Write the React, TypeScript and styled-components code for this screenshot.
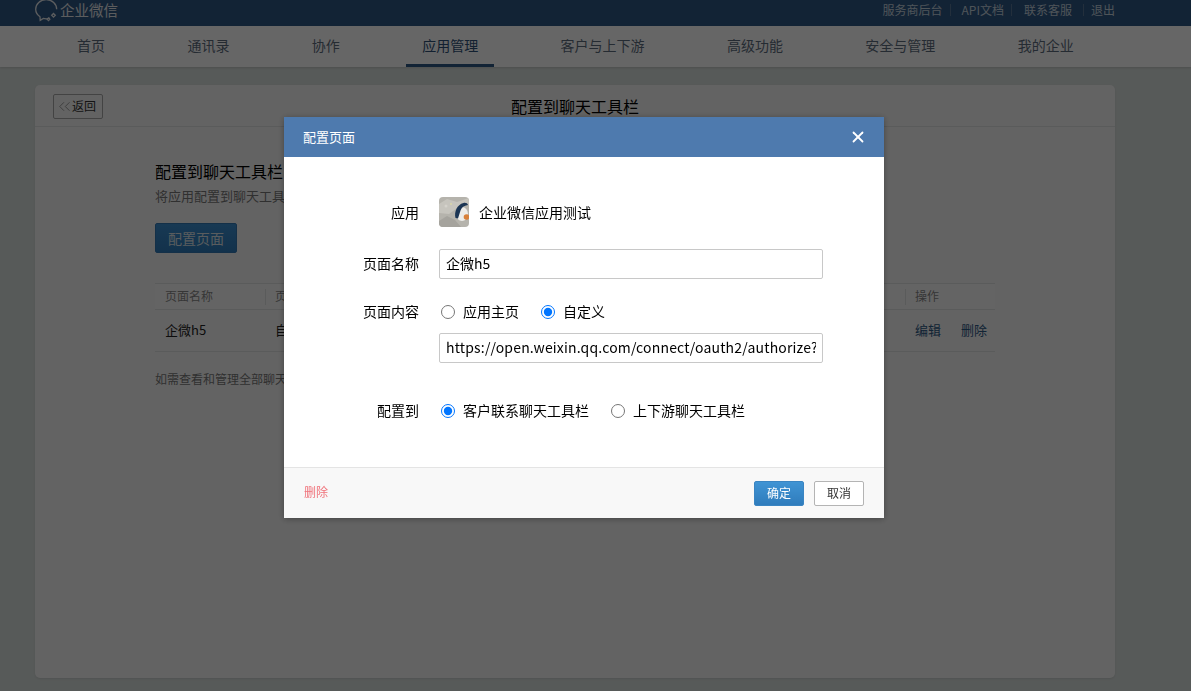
import React from 'react';
import styled, { createGlobalStyle } from 'styled-components';
import { ChevronsLeft, X } from 'lucide-react';

const GlobalStyle = createGlobalStyle`
  html, body {
    margin: 0;
    height: 691px;
    overflow: hidden;
    background: #fff;
    font-family: "Noto Sans CJK SC", "Liberation Sans", sans-serif;
    font-size: 14px;
    color: #000;
  }
  * { box-sizing: border-box; }
`;

const navItems = ['首页', '通讯录', '协作', '应用管理', '客户与上下游', '高级功能', '安全与管理', '我的企业'];

const App = () => {
  return (
    <>
      <GlobalStyle />
      <Page>
        <TopBar>
          <Logo>
            <svg width="23" height="23" viewBox="0 0 23 23" fill="none" stroke="currentColor" strokeWidth="1.3">
              <path d="M15 19.2a11.500 11.500 0 0 1-3.800.6c-1 0-2-.1-2.900-.4L5.200 21.400l-.2-3.600C2.200 15.900.7 13.300.7 10.300.7 5 5.300.7 11.200.7s10.500 4.300 10.500 9.600" />
              <path d="M18.500 14.500l1.800 1.800-1.800 1.800-1.800-1.800z" />
              <path d="M13.500 19l1.300 1.300-1.300 1.300-1.300-1.300z" />
            </svg>
            <LogoText>企业微信</LogoText>
          </Logo>
          <TopLinks>
            <TopLink>服务商后台</TopLink>
            <TopLink $before={7} $pad={11}>API文档</TopLink>
            <TopLink $before={7} $pad={12}>联系客服</TopLink>
            <TopLink $before={11} $pad={7}>退出</TopLink>
          </TopLinks>
        </TopBar>
        <Nav>
          {navItems.map((item) => (
            <NavItem key={item} $active={item === '应用管理'}>{item}</NavItem>
          ))}
        </Nav>
        <Card>
          <CardHead>
            <BackButton>
              <ChevronsLeft size={19} strokeWidth={0.9} />
              <BackText>返回</BackText>
            </BackButton>
            <CardTitle>配置到聊天工具栏</CardTitle>
          </CardHead>
          <CardBody>
            <Heading>配置到聊天工具栏</Heading>
            <Description>将应用配置到聊天工具栏</Description>
            <PrimaryLarge>配置页面</PrimaryLarge>
            <Table>
              <TableHead>
                <HeadCell>页面名称</HeadCell>
                <HeadCell $grow $sep>页面内容</HeadCell>
                <HeadCell $narrow $sep>操作</HeadCell>
              </TableHead>
              <TableRow>
                <Cell>企微h5</Cell>
                <Cell $grow>自定义</Cell>
                <Cell $narrow>
                  <ActionLink>编辑</ActionLink>
                  <ActionLink>删除</ActionLink>
                </Cell>
              </TableRow>
            </Table>
            <Note>如需查看和管理全部聊天工具栏页面</Note>
          </CardBody>
        </Card>
      </Page>

      <Overlay>
        <Modal>
          <ModalHead>
            <ModalTitle>配置页面</ModalTitle>
            <CloseIcon><X size={18} strokeWidth={2.4} /></CloseIcon>
          </ModalHead>
          <ModalBody>
            <FormRow $after={22}>
              <AppLabel>应用</AppLabel>
              <AppInfo>
                <svg width="30" height="30" viewBox="0 0 30 30" style={{ borderRadius: 4 }}>
                  <rect width="30" height="30" fill="#b5b3ac" />
                  <path d="M0 7l8-5 10 3 12-4v7l-12 3-8 6-10-1z" fill="#c6c4bd" />
                  <path d="M0 24l8-5 8 4 6 7H0z" fill="#a5a39d" />
                  <circle cx="7" cy="9" r="1.500" fill="#d4d2cb" />
                  <circle cx="12" cy="7" r="1" fill="#d8d6a8" />
                  <ellipse cx="23" cy="17" rx="6" ry="7" fill="#ecebe8" />
                  <path d="M16.500 21c-1.500-6 1.500-13.500 8-15 2.500-.5 4 .5 4.500 2-4 .5-6.500 2.500-7.500 5.500l-2.500 8z" fill="#1b3554" />
                  <circle cx="27.500" cy="20" r="2.800" fill="#d8803a" />
                </svg>
                <AppName>企业微信应用测试</AppName>
              </AppInfo>
            </FormRow>
            <FormRow $after={18}>
              <FormLabel>页面名称</FormLabel>
              <TextInput defaultValue="企微h5" />
            </FormRow>
            <FormRow $after={6}>
              <FormLabel>页面内容</FormLabel>
              <RadioGroup>
                <RadioLabel><input type="radio" name="content" /><RadioText>应用主页</RadioText></RadioLabel>
                <RadioLabel><input type="radio" name="content" defaultChecked /><RadioText>自定义</RadioText></RadioLabel>
              </RadioGroup>
            </FormRow>
            <FormRow $after={33}>
              <span />
              <UrlInput defaultValue="https://open.weixin.qq.com/connect/oauth2/authorize?" />
            </FormRow>
            <FormRow $after={0}>
              <FormLabel>配置到</FormLabel>
              <RadioGroup>
                <RadioLabel><input type="radio" name="target" defaultChecked /><RadioText>客户联系聊天工具栏</RadioText></RadioLabel>
                <RadioLabel><input type="radio" name="target" /><RadioText>上下游聊天工具栏</RadioText></RadioLabel>
              </RadioGroup>
            </FormRow>
          </ModalBody>
          <ModalFoot>
            <DeleteLink>删除</DeleteLink>
            <FootButtons>
              <ConfirmButton>确定</ConfirmButton>
              <CancelButton>取消</CancelButton>
            </FootButtons>
          </ModalFoot>
        </Modal>
      </Overlay>
    </>
  );
};

const Page = styled.div`
  height: 691px;
  background: #dae0de;
  display: flex;
  flex-direction: column;
`;

const TopBar = styled.header`
  height: 26px;
  flex: none;
  background: #2e5886;
  display: flex;
  justify-content: space-between;
  padding: 0 76px 0 35px;
  overflow: hidden;
`;

const Logo = styled.div`
  display: flex;
  align-items: flex-start;
  gap: 2px;
  color: #e6e9ec;
  margin-top: -1px;
`;

const LogoText = styled.span`
  font-size: 14.5px;
  line-height: 22px;
`;

const TopLinks = styled.div`
  display: flex;
  align-items: center;
  height: 20px;
`;

const TopLink = styled.span<{ $before?: number; $pad?: number }>`
  font-size: 12px;
  line-height: 12px;
  color: #c4d2dd;
  ${(p) => p.$pad && `
    border-left: 1px solid #577796;
    margin-left: ${p.$before}px;
    padding-left: ${p.$pad}px;
  `}
`;

const Nav = styled.nav`
  height: 41px;
  flex: none;
  background: #fff;
  display: flex;
  gap: 50.4px;
  padding-left: 61px;
  box-shadow: 0 1px 2px rgba(0, 0, 0, 0.12);
`;

const NavItem = styled.a<{ $active?: boolean }>`
  height: 41px;
  padding: 0 16px;
  font-size: 14px;
  line-height: 38px;
  color: #5d6d7e;
  border-bottom: 3px solid ${(p) => (p.$active ? '#2e5886' : 'transparent')};
  ${(p) => p.$active && 'color: #2e5078;'}
`;

const Card = styled.main`
  width: 1080px;
  height: 593px;
  margin: 18px 0 0 35px;
  background: #f8f8f8;
  border-radius: 5px;
  box-shadow: 0 1px 2px rgba(0, 0, 0, 0.08);
`;

const CardHead = styled.div`
  position: relative;
  height: 42px;
  border-bottom: 1px solid #e2e4e4;
  display: flex;
  align-items: center;
  justify-content: center;
`;

const BackButton = styled.button`
  position: absolute;
  left: 18px;
  top: 9px;
  width: 50px;
  height: 25px;
  padding: 0 0 0 1px;
  display: flex;
  align-items: center;
  background: #f8f8f8;
  border: 1px solid #a8a8a8;
  border-radius: 2px;
  font: inherit;
  font-size: 12px;
  color: #333;
  svg { color: #777; }
`;

const BackText = styled.span`
  margin-left: -2px;
  line-height: 16px;
  padding-bottom: 2px;
`;

const CardTitle = styled.h1`
  margin: 0;
  font-size: 16px;
  font-weight: 400;
  line-height: 42px;
  color: #000;
`;

const CardBody = styled.div`
  padding: 32px 120px 0;
`;

const Heading = styled.h2`
  margin: 0;
  font-size: 16px;
  font-weight: 400;
  line-height: 24px;
  color: #000;
`;

const Description = styled.p`
  margin: 3px 0 0;
  font-size: 13px;
  line-height: 20px;
  color: #787878;
`;

const PrimaryLarge = styled.button`
  display: block;
  width: 82px;
  height: 30px;
  margin-top: 17px;
  padding: 0 0 1px;
  background: linear-gradient(#3d8fd1, #2f7cbc);
  border: 1px solid #3278b3;
  border-radius: 2px;
  font: inherit;
  font-size: 14px;
  color: #dfe6ea;
`;

const Table = styled.div`
  margin-top: 30px;
`;

const TableHead = styled.div`
  height: 27px;
  display: flex;
  align-items: center;
  background: #fbfbfb;
  border-top: 1px solid #e2e4e4;
  border-bottom: 1px solid #e2e4e4;
`;

const TableRow = styled.div`
  height: 42px;
  display: flex;
  align-items: center;
  border-bottom: 1px solid #e2e4e4;
`;

const HeadCell = styled.div<{ $grow?: boolean; $narrow?: boolean; $sep?: boolean }>`
  width: ${(p) => (p.$narrow ? '90px' : '110px')};
  ${(p) => p.$grow && 'flex: 1;'}
  height: 16px;
  padding-left: ${(p) => (p.$sep ? '9px' : '10px')};
  font-size: 12px;
  line-height: 14px;
  color: #888;
  ${(p) => p.$sep && 'border-left: 1px solid #e2e4e4;'}
`;

const Cell = styled.div<{ $grow?: boolean; $narrow?: boolean }>`
  width: ${(p) => (p.$narrow ? '90px' : '110px')};
  ${(p) => p.$grow && 'flex: 1;'}
  padding: 0 0 3px 10px;
  font-size: 13px;
  color: #222;
  display: flex;
  gap: 20px;
`;

const ActionLink = styled.a`
  color: #2e5a86;
`;

const Note = styled.p`
  margin: 18px 0 0;
  font-size: 12px;
  line-height: 18px;
  color: #787878;
`;

const Overlay = styled.div`
  position: fixed;
  inset: 0;
  background: rgba(0, 0, 0, 0.6);
  padding: 117px 0 0 284px;
`;

const Modal = styled.section`
  width: 600px;
  height: 401px;
  background: #fff;
  border-radius: 2px;
  display: flex;
  flex-direction: column;
  box-shadow: 0 1px 6px rgba(0, 0, 0, 0.35);
`;

const ModalHead = styled.div`
  height: 40px;
  flex: none;
  background: #4e7aae;
  padding: 0 19px;
  display: flex;
  align-items: center;
  justify-content: space-between;
  font-size: 13px;
  color: #fff;
`;

const ModalTitle = styled.span`
  padding-bottom: 2px;
`;

const CloseIcon = styled.span`
  display: flex;
  margin-right: -2px;
`;

const ModalBody = styled.div`
  flex: 1;
  padding-top: 40px;
`;

const FormRow = styled.div<{ $after: number }>`
  display: grid;
  grid-template-columns: 135px 384px;
  column-gap: 20px;
  align-items: center;
  height: 30px;
  margin-bottom: ${(p) => p.$after}px;
`;

const FormLabel = styled.label`
  text-align: right;
  font-size: 14px;
  padding-bottom: 2px;
`;

const AppLabel = styled(FormLabel)`
  padding-bottom: 0;
`;

const AppInfo = styled.div`
  display: flex;
  align-items: center;
  gap: 10px;
`;

const AppName = styled.span`
  font-size: 14px;
`;

const TextInput = styled.input`
  width: 384px;
  height: 30px;
  padding: 0 6px 2px;
  border: 1px solid #c8c8c8;
  border-radius: 2px;
  background: #fff;
  font: inherit;
  font-size: 14px;
  color: #000;
  outline: none;
`;

const UrlInput = styled(TextInput)`
  letter-spacing: 0.17px;
`;

const RadioGroup = styled.div`
  display: flex;
  gap: 22px;
  padding-left: 2px;
`;

const RadioLabel = styled.label`
  display: flex;
  align-items: center;
  gap: 8px;
  font-size: 14px;
  input {
    width: 14px;
    height: 14px;
    margin: 0;
  }
`;

const RadioText = styled.span`
  padding-bottom: 2px;
`;

const ModalFoot = styled.div`
  height: 51px;
  flex: none;
  background: #f8f8f8;
  border-top: 1px solid #e4e4e4;
  padding: 0 20px;
  display: flex;
  align-items: center;
  justify-content: space-between;
`;

const DeleteLink = styled.a`
  font-size: 12px;
  padding-bottom: 3px;
  color: #f0727a;
`;

const FootButtons = styled.div`
  display: flex;
  gap: 10px;
`;

const ConfirmButton = styled.button`
  width: 50px;
  height: 25px;
  padding: 0 0 2px;
  background: linear-gradient(#4094d4, #2f7cbc);
  border: 1px solid #3a85c2;
  border-radius: 2px;
  font: inherit;
  font-size: 12px;
  color: #fff;
`;

const CancelButton = styled.button`
  width: 50px;
  height: 25px;
  padding: 0 0 2px;
  background: #fff;
  border: 1px solid #b4b4b4;
  border-radius: 2px;
  font: inherit;
  font-size: 12px;
  color: #333;
`;

export default App;
